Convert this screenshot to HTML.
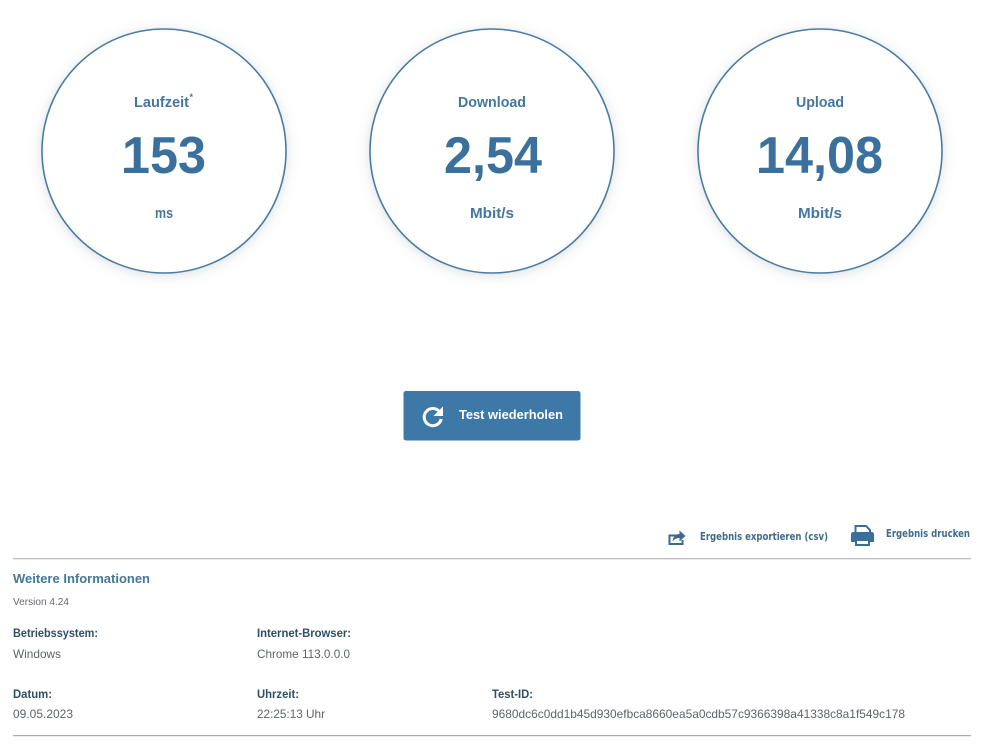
<!DOCTYPE html>
<html lang="de">
<head>
<meta charset="utf-8">
<title>Ergebnis</title>
<style>
html,body{margin:0;padding:0;background:#fff;width:999px;height:744px;overflow:hidden}
svg{display:block;position:absolute;left:0;top:0;filter:blur(.3px)}
text{font-family:"Liberation Sans",sans-serif}
.lab{font-size:14.5px;font-weight:bold;fill:#44779f}
.big{font-size:52px;font-weight:bold;fill:#3b709c}
.h{font-size:12px;font-weight:bold;fill:#2f4f66}
.v{font-size:12px;fill:#5f6468}
.l{font-family:"DejaVu Sans",sans-serif;font-size:10.5px;font-weight:bold;fill:#3f6b8c}
</style>
</head>
<body>
<svg width="999" height="744" viewBox="0 0 999 744" xmlns="http://www.w3.org/2000/svg">
<defs>
<filter id="s" x="-20%" y="-20%" width="140%" height="140%"><feDropShadow dx="0" dy="2" stdDeviation="6" flood-color="#6f7f8c" flood-opacity=".25"/></filter>
</defs>
<circle cx="164" cy="151" r="122" fill="#fff" stroke="#4a7ba3" stroke-width="1.6" filter="url(#s)"/>
<circle cx="492" cy="151" r="122" fill="#fff" stroke="#4a7ba3" stroke-width="1.6" filter="url(#s)"/>
<circle cx="820" cy="151" r="122" fill="#fff" stroke="#4a7ba3" stroke-width="1.6" filter="url(#s)"/>

<text class="lab" x="134" y="107" textLength="55" lengthAdjust="spacingAndGlyphs">Laufzeit</text>
<text x="189.5" y="100" font-size="9" font-weight="bold" fill="#44779f">*</text>
<text class="big" x="122" y="173" textLength="84" lengthAdjust="spacingAndGlyphs">153</text>
<rect x="124" y="168" width="23" height="5" fill="#3b709c"/>
<text class="lab" x="155" y="218" textLength="18" lengthAdjust="spacingAndGlyphs">ms</text>

<text class="lab" x="458" y="107" textLength="68" lengthAdjust="spacingAndGlyphs">Download</text>
<text class="big" x="444" y="173" textLength="98" lengthAdjust="spacingAndGlyphs">2,54</text>
<text class="lab" x="470" y="218" textLength="44" lengthAdjust="spacingAndGlyphs">Mbit/s</text>

<text class="lab" x="796" y="107" textLength="48" lengthAdjust="spacingAndGlyphs">Upload</text>
<text class="big" x="757" y="173" textLength="126" lengthAdjust="spacingAndGlyphs">14,08</text>
<rect x="759" y="168" width="23" height="5" fill="#3b709c"/>
<text class="lab" x="798" y="218" textLength="44" lengthAdjust="spacingAndGlyphs">Mbit/s</text>

<rect x="403.5" y="391" width="177" height="49.5" rx="2.5" fill="#3d78a6"/>
<path d="M439.6 411.8A8.6 8.6 0 1 0 441.2 419" fill="none" stroke="#fff" stroke-width="3"/>
<path d="M443 406.5V416H433.5Z" fill="#fff"/>
<text x="459" y="419" font-size="12.5" font-weight="bold" fill="#fff" textLength="104" lengthAdjust="spacingAndGlyphs">Test wiederholen</text>

<path d="M678 535.5H669.5V544H682.5V540" fill="none" stroke="#3c6a8c" stroke-width="2"/>
<path d="M672.5 541.5C673 536.5 676 534 679.5 534V530.5L685.5 536L679.5 541.5V538C676.5 538 674.5 539 672.5 541.5Z" fill="#3c6a8c"/>
<text class="l" x="700" y="540" textLength="128" lengthAdjust="spacingAndGlyphs">Ergebnis exportieren (csv)</text>

<path d="M855.5 533V526H866L870 530V533" fill="none" stroke="#3a6f9b" stroke-width="2"/>
<path d="M853.5 532H871.5Q874 532 874 534.5V542H870V539H855V542H851V534.5Q851 532 853.5 532Z" fill="#3a6f9b"/>
<path d="M856 540H869V545H856Z" fill="#fff" stroke="#3a6f9b" stroke-width="2"/>
<text class="l" x="886" y="537" textLength="84" lengthAdjust="spacingAndGlyphs">Ergebnis drucken</text>

<rect x="13" y="558" width="958" height="1.3" fill="#bdbdbd"/>

<text x="13" y="583" font-size="12.5" font-weight="bold" fill="#44779a" textLength="137" lengthAdjust="spacingAndGlyphs">Weitere Informationen</text>
<text x="13" y="605" font-size="10" fill="#666a6e" textLength="56" lengthAdjust="spacingAndGlyphs">Version 4.24</text>

<text class="h" x="13" y="637" textLength="85" lengthAdjust="spacingAndGlyphs">Betriebssystem:</text>
<text class="v" x="13" y="658" textLength="48" lengthAdjust="spacingAndGlyphs">Windows</text>
<text class="h" x="257" y="637" textLength="94" lengthAdjust="spacingAndGlyphs">Internet-Browser:</text>
<text class="v" x="257" y="658" textLength="93" lengthAdjust="spacingAndGlyphs">Chrome 113.0.0.0</text>

<text class="h" x="13" y="698" textLength="39" lengthAdjust="spacingAndGlyphs">Datum:</text>
<text class="v" x="13" y="718" textLength="60" lengthAdjust="spacingAndGlyphs">09.05.2023</text>
<text class="h" x="257" y="698" textLength="42" lengthAdjust="spacingAndGlyphs">Uhrzeit:</text>
<text class="v" x="257" y="718" textLength="68" lengthAdjust="spacingAndGlyphs">22:25:13 Uhr</text>
<text class="h" x="492" y="698" textLength="41" lengthAdjust="spacingAndGlyphs">Test-ID:</text>
<text class="v" x="492" y="718" textLength="413" lengthAdjust="spacingAndGlyphs">9680dc6c0dd1b45d930efbca8660ea5a0cdb57c9366398a41338c8a1f549c178</text>

<rect x="13" y="735" width="958" height="1.2" fill="#a9a9a9"/>
</svg>
</body>
</html>
